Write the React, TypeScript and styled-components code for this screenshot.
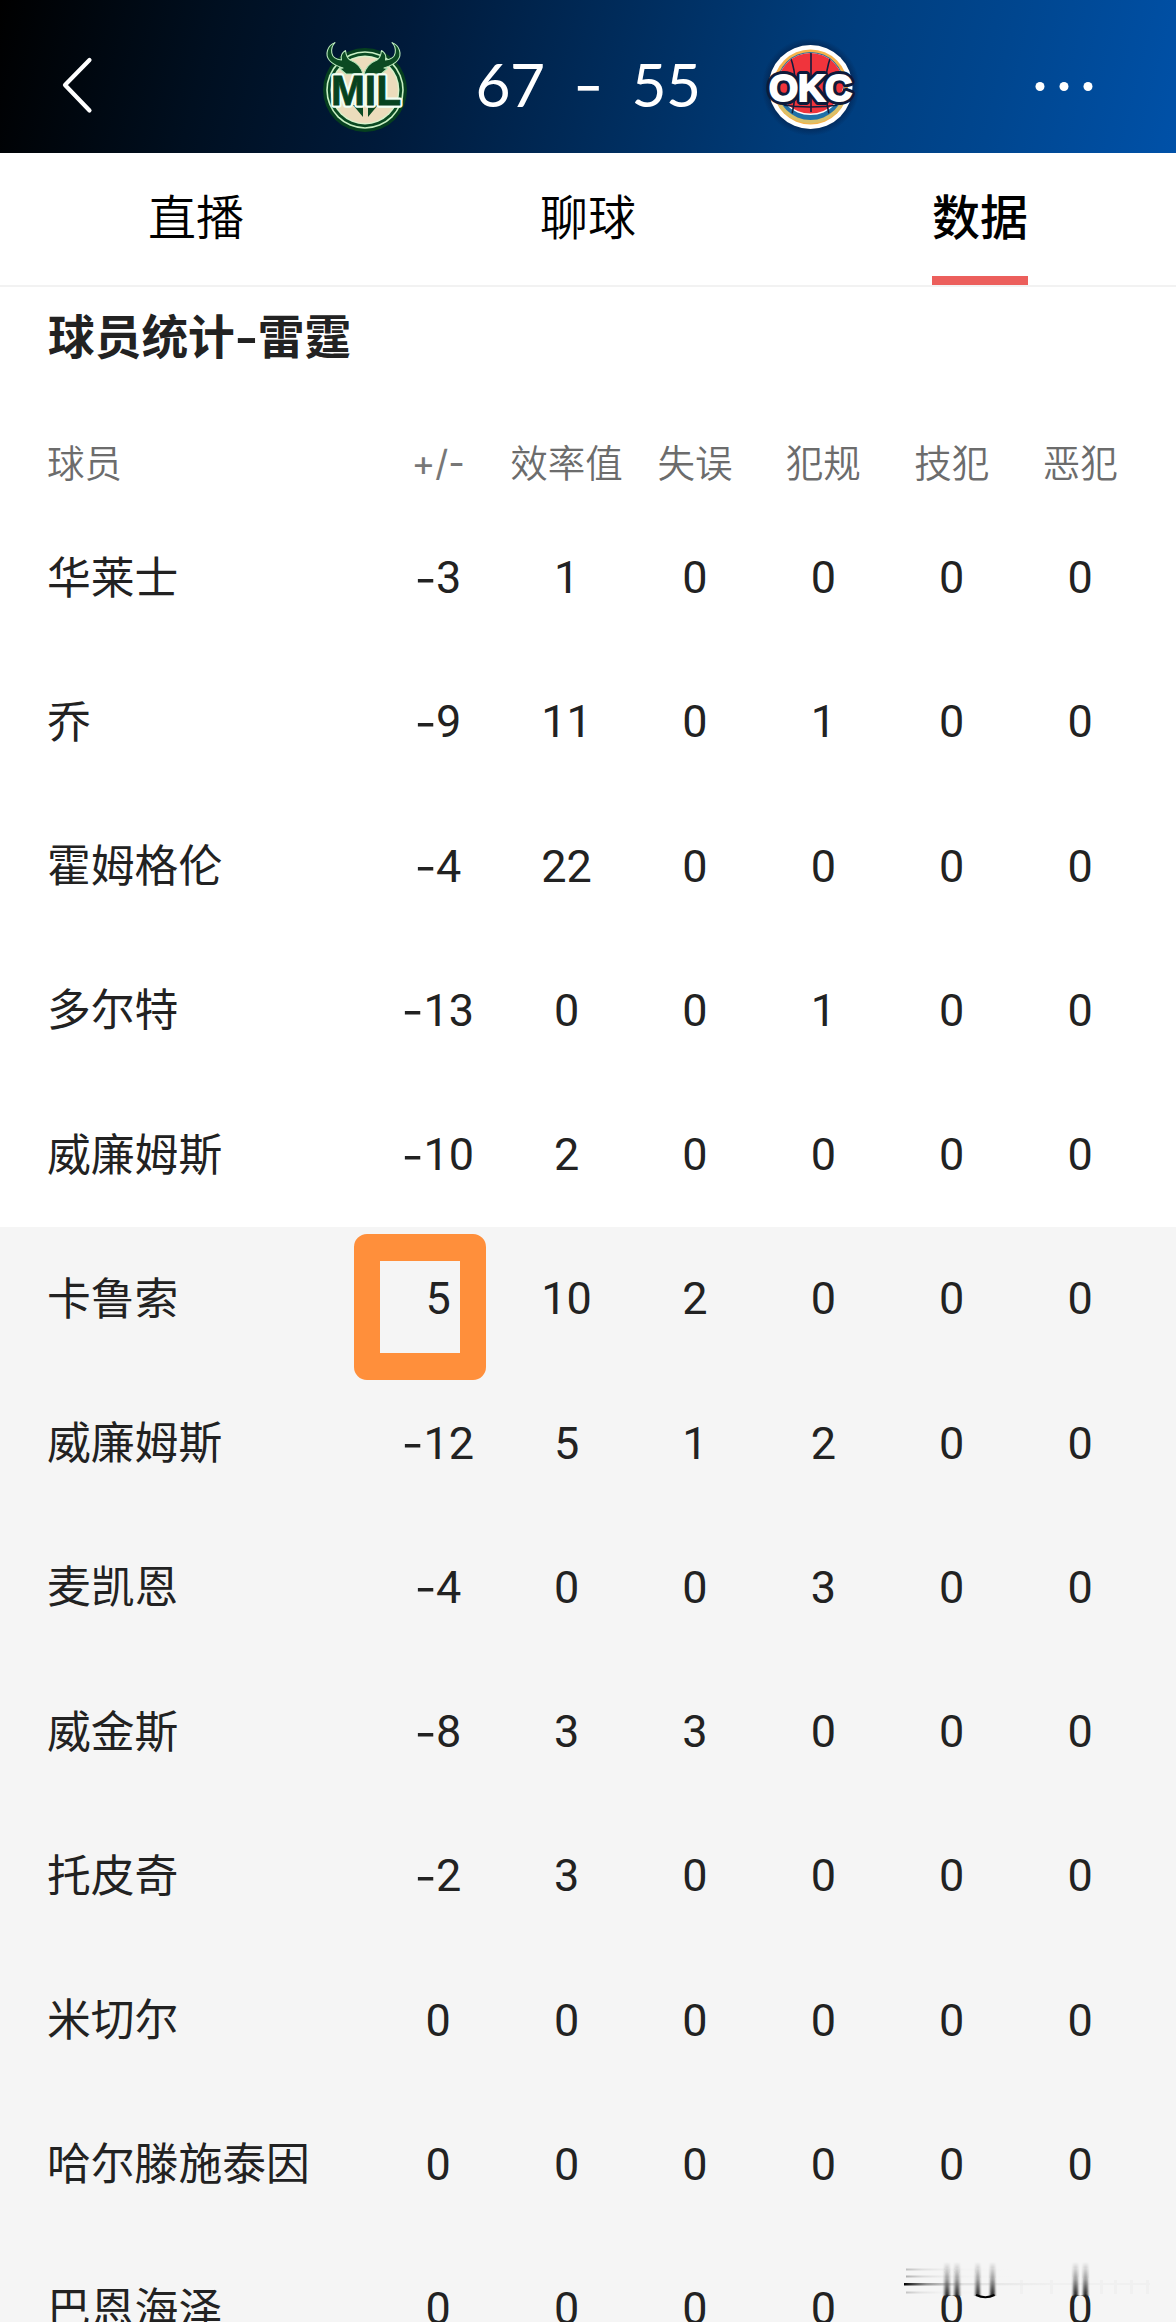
import React from 'react';
import styled, { createGlobalStyle, css } from 'styled-components';

const CJK = `"Noto Sans CJK SC", sans-serif`;
const DIGITS = `Roboto, "Noto Sans CJK SC", sans-serif`;
const SCREEN_HEIGHT = 2322;

const GlobalStyle = createGlobalStyle`
  body {
    margin: 0;
    background: #f5f5f5;
  }
`;

const Screen = styled.div`
  position: relative;
  width: 1176px;
  height: ${SCREEN_HEIGHT}px;
  overflow: hidden;
  background: #fff;
  font-family: ${CJK};
  color: #222;
`;

const Header = styled.header`
  display: grid;
  grid-template-columns: 310px 110px 335px 110px 1fr;
  height: 153px;
  background: linear-gradient(
    104deg,
    #000 0%,
    #000f20 18%,
    #001a3a 34%,
    #002a58 50%,
    #003c7a 68%,
    #00468f 84%,
    #0051a8 100%
  );
`;

const HeaderArt = styled.svg`
  display: block;
  height: 153px;
`;

const Score = styled.div`
  display: grid;
  grid-template-columns: repeat(3, 78px);
  justify-content: center;
  padding: 47px 0 0 1px;
  height: 74px;
  line-height: 74px;
  text-align: center;
  font-family: Lato, sans-serif;
  font-size: 60.5px;
  letter-spacing: -0.5px;
  color: #fff;
`;

const ScoreDash = styled.span`
  font-family: Inter, sans-serif;
  font-size: 57px;
  padding-top: 2px;
  transform: scaleX(1.15);
`;

const Tabs = styled.nav`
  display: grid;
  grid-template-columns: repeat(3, 1fr);
  height: 132px;
  border-bottom: 2px solid #f2f2f2;
`;

const Tab = styled.div<{ $active?: boolean }>`
  justify-self: center;
  box-sizing: border-box;
  height: 132px;
  padding-top: 25px;
  line-height: 72px;
  font-size: 48px;
  font-weight: ${p => (p.$active ? 500 : 350)};
  color: #000;
  border-bottom: 9px solid ${p => (p.$active ? '#ec5f5c' : 'transparent')};
`;

const Title = styled.h2`
  margin: 0;
  height: 133px;
  padding: 12px 0 0 48px;
  box-sizing: border-box;
  line-height: 70px;
  font-size: 46.7px;
  font-weight: 700;
`;

const TitleDash = styled.span`
  display: inline-block;
  width: 23px;
  text-align: center;
  transform: scaleX(1.35);
`;

const rowGrid = css`
  display: grid;
  grid-template-columns: 326px repeat(6, 128.4px);
  padding-left: 48px;
  align-items: center;
`;

const HeadRow = styled.div`
  ${rowGrid}
  height: 85.5px;
  font-size: 37.5px;
  font-weight: 350;
  color: #6c6c6c;
`;

const HeadCell = styled.span<{ $latin?: boolean; $first?: boolean }>`
  text-align: ${p => (p.$first ? 'left' : 'center')};
  white-space: nowrap;
  padding-bottom: 5px;
  margin-left: ${p => (p.$first ? '-1px' : '0')};
  ${p =>
    p.$latin &&
    css`
      padding-bottom: 0;
      font-family: Inter, sans-serif;
      font-size: 36px;
      font-weight: 400;
      color: #777;
    `}
`;

const Group = styled.section<{ $shaded?: boolean }>`
  background: ${p => (p.$shaded ? '#f5f5f5' : '#fff')};
`;

const Row = styled.div`
  ${rowGrid}
  height: 144.25px;
`;

const Name = styled.span`
  margin-left: -1px;
  padding-bottom: 6px;
  font-size: 43.8px;
  white-space: nowrap;
`;

const Value = styled.span`
  position: relative;
  display: flex;
  align-items: center;
  justify-content: center;
  height: 100%;
  font-family: ${DIGITS};
  font-size: 45px;
`;

const Minus = styled.span`
  width: 21px;
  text-align: center;
  font-family: Inter, sans-serif;
  font-size: 43px;
  transform: scaleX(1.12);
`;

const Highlight = styled.i`
  position: absolute;
  left: -20px;
  top: 7px;
  box-sizing: border-box;
  width: 131.5px;
  height: 146px;
  border: solid #ff8f3b;
  border-width: 27px 26.5px;
  border-radius: 13px;
`;

const Smear = styled.svg`
  position: absolute;
  left: 896px;
  top: 2256px;
`;

const Antler = ({ flip }: { flip?: boolean }) => (
  <path
    transform={flip ? 'translate(727 0) scale(-1 1)' : undefined}
    d="M335 42.700C327.500 45 324.500 54.500 329.500 60.500C333 64.500 338 66.500 343 68L339.500 68.500L346 74L363 74C361 66.500 356.500 62.500 350 60C347 58 346 55 345.500 50.500C341.500 53 340.500 56.500 341.500 60C336 59.500 332.500 57 331.800 53C331.200 49 332 45.500 335 42.700Z"
    fill="#0b4a22"
    stroke="#b9e8bb"
    strokeWidth="1.100"
    strokeLinejoin="round"
  />
);

const BucksLogo = () => (
  <HeaderArt width="110" viewBox="310 0 110 153">
    <circle cx="365" cy="90" r="42" fill="#06401f" />
    <circle cx="365" cy="90" r="38.800" fill="#c9f0c4" />
    <circle cx="365" cy="90" r="37.200" fill="#0a4a22" />
    <circle cx="365" cy="90" r="34.400" fill="#d9f3cc" />
    <circle cx="365" cy="90" r="33" fill="#ecdcbc" />
    <Antler />
    <Antler flip />
    <path d="M353 105l10 12v-12zM378 105l-10 12v-12z" fill="#0b4a22" />
    <text
      x="331"
      y="104.500"
      textLength="70"
      lengthAdjust="spacingAndGlyphs"
      fontFamily="Liberation Sans, sans-serif"
      fontWeight="700"
      fontSize="42.500"
      fill="none"
      stroke="#f2fff4"
      strokeWidth="5.500"
      strokeLinejoin="round"
    >
      MIL
    </text>
    <text
      x="331"
      y="104.500"
      textLength="70"
      lengthAdjust="spacingAndGlyphs"
      fontFamily="Liberation Sans, sans-serif"
      fontWeight="700"
      fontSize="42.500"
      fill="#07421f"
      stroke="#07421f"
      strokeWidth="0.800"
      aria-hidden="true"
    >
      MIL
    </text>
  </HeaderArt>
);

const ThunderLogo = () => (
  <HeaderArt width="110" viewBox="755 0 110 153">
    <defs>
      <clipPath id="ball">
        <circle cx="810.500" cy="86" r="33" />
      </clipPath>
      <radialGradient id="glow">
        <stop offset="0.800" stopColor="#04204a" stopOpacity="0.800" />
        <stop offset="1" stopColor="#04204a" stopOpacity="0" />
      </radialGradient>
    </defs>
    <circle cx="810.500" cy="87" r="49" fill="url(#glow)" />
    <circle cx="810.500" cy="87" r="42" fill="#fff" />
    <circle cx="810.500" cy="87" r="37.500" fill="#f6b24a" />
    <path d="M773.500 92a37.500 37.500 0 0 0 74 0z" fill="#d9c06a" />
    <circle cx="810.500" cy="86" r="34" fill="#2071a8" />
    <g clipPath="url(#ball)">
      <circle cx="810.500" cy="81" r="34" fill="#fff" />
      <circle cx="810.500" cy="80" r="33.500" fill="#f0343c" />
      <g fill="none" stroke="#101c3d" strokeWidth="1.600">
        <path d="M811 50v62M790 56c7 18 7 36 2 58M831 56c-7 18-7 36-2 58M782 105q28 4 57 0" />
      </g>
    </g>
    <text
      x="769"
      y="100.500"
      textLength="83"
      lengthAdjust="spacingAndGlyphs"
      fontFamily="Liberation Sans, sans-serif"
      fontWeight="700"
      fontSize="37"
      fill="none"
      stroke="#0e1a3a"
      strokeWidth="8"
      strokeLinejoin="round"
    >
      OKC
    </text>
    <text
      x="769"
      y="100.500"
      textLength="83"
      lengthAdjust="spacingAndGlyphs"
      fontFamily="Liberation Sans, sans-serif"
      fontWeight="700"
      fontSize="37"
      fill="#fff"
      stroke="#fff"
      strokeWidth="2"
      aria-hidden="true"
    >
      OKC
    </text>
  </HeaderArt>
);

const SmearMark = () => (
  <Smear width="264" height="66" viewBox="896 2256 264 66">
    <defs>
      <linearGradient id="fadeUp" x1="0" y1="0" x2="0" y2="1">
        <stop offset="0" stopColor="#222" stopOpacity="0" />
        <stop offset="0.500" stopColor="#222" stopOpacity="0.400" />
        <stop offset="1" stopColor="#1a1a1a" stopOpacity="0.950" />
      </linearGradient>
      <linearGradient id="edge" x1="0" y1="0" x2="1" y2="0">
        <stop offset="0" stopColor="#000" />
        <stop offset="0.150" stopColor="#333" stopOpacity="0.500" />
        <stop offset="0.400" stopColor="#777" stopOpacity="0.120" />
        <stop offset="1" stopColor="#999" stopOpacity="0" />
      </linearGradient>
      <filter id="soft" x="-40%" y="-10%" width="180%" height="120%">
        <feGaussianBlur stdDeviation="1.300 0.300" />
      </filter>
    </defs>
    <path d="M938 2286h28v9.500h-28zM1066 2286h28v9.500h-28z" fill="#f5f5f5" />
    <g fill="url(#fadeUp)" filter="url(#soft)">
      <rect x="944.500" y="2262" width="5" height="34" />
      <rect x="954.500" y="2262" width="5" height="34" />
      <rect x="975.500" y="2262" width="4.500" height="34" />
      <rect x="990" y="2262" width="5" height="34" />
      <rect x="1073" y="2262" width="5" height="34" />
      <rect x="1083" y="2262" width="5" height="34" />
    </g>
    <path d="M976 2295q9.500 4.500 18.500 0" fill="none" stroke="#000" strokeWidth="2" />
    <g fill="url(#edge)">
      <rect x="904" y="2283" width="150" height="2.500" />
      <rect x="906" y="2268.500" width="110" height="2" opacity="0.220" />
      <rect x="906" y="2275.500" width="110" height="2" opacity="0.280" />
      <rect x="906" y="2291.500" width="90" height="2" opacity="0.200" />
    </g>
    <g fill="#888" opacity="0.040">
      <rect x="960" y="2283" width="190" height="2" />
      <rect x="1020" y="2280" width="3" height="14" />
      <rect x="1050" y="2280" width="3" height="14" />
      <rect x="1100" y="2280" width="3" height="14" />
      <rect x="1114" y="2280" width="3" height="14" />
      <rect x="1130" y="2280" width="3" height="14" />
      <rect x="1146" y="2280" width="3" height="14" />
    </g>
  </Smear>
);

type Player = { name: string; stats: number[]; marked?: boolean };

const COLUMNS = ['+/-', '效率值', '失误', '犯规', '技犯', '恶犯'];

const STARTERS: Player[] = [
  { name: '华莱士', stats: [-3, 1, 0, 0, 0, 0] },
  { name: '乔', stats: [-9, 11, 0, 1, 0, 0] },
  { name: '霍姆格伦', stats: [-4, 22, 0, 0, 0, 0] },
  { name: '多尔特', stats: [-13, 0, 0, 1, 0, 0] },
  { name: '威廉姆斯', stats: [-10, 2, 0, 0, 0, 0] },
];

const BENCH: Player[] = [
  { name: '卡鲁索', stats: [5, 10, 2, 0, 0, 0], marked: true },
  { name: '威廉姆斯', stats: [-12, 5, 1, 2, 0, 0] },
  { name: '麦凯恩', stats: [-4, 0, 0, 3, 0, 0] },
  { name: '威金斯', stats: [-8, 3, 3, 0, 0, 0] },
  { name: '托皮奇', stats: [-2, 3, 0, 0, 0, 0] },
  { name: '米切尔', stats: [0, 0, 0, 0, 0, 0] },
  { name: '哈尔滕施泰因', stats: [0, 0, 0, 0, 0, 0] },
  { name: '巴恩海泽', stats: [0, 0, 0, 0, 0, 0] },
];

const PlayerRow = ({ player }: { player: Player }) => (
  <Row>
    <Name>{player.name}</Name>
    {player.stats.map((n, i) => (
      <Value key={i}>
        {n < 0 && <Minus>-</Minus>}
        {Math.abs(n)}
        {player.marked && i === 0 && <Highlight />}
      </Value>
    ))}
  </Row>
);

export default function App() {
  return (
    <Screen>
      <GlobalStyle />
      <Header>
        <HeaderArt width="310" viewBox="0 0 310 153">
          <path
            d="M89.500 60L65 85l24.500 25.500"
            fill="none"
            stroke="#fff"
            strokeWidth="4.200"
            strokeLinecap="round"
            strokeLinejoin="round"
          />
        </HeaderArt>
        <BucksLogo />
        <Score>
          <span>67</span>
          <ScoreDash>-</ScoreDash>
          <span>55</span>
        </Score>
        <ThunderLogo />
        <HeaderArt width="311" viewBox="865 0 311 153">
          <g fill="#fff">
            <circle cx="1040" cy="86.500" r="4.500" />
            <circle cx="1064" cy="86.500" r="4.500" />
            <circle cx="1088" cy="86.500" r="4.500" />
          </g>
        </HeaderArt>
      </Header>
      <Tabs>
        <Tab>直播</Tab>
        <Tab>聊球</Tab>
        <Tab $active>数据</Tab>
      </Tabs>
      <Title>
        球员统计<TitleDash>-</TitleDash>雷霆
      </Title>
      <HeadRow>
        <HeadCell $first>球员</HeadCell>
        {COLUMNS.map((c, i) => (
          <HeadCell key={c} $latin={i === 0}>
            {c}
          </HeadCell>
        ))}
      </HeadRow>
      <Group>
        {STARTERS.map((p, i) => (
          <PlayerRow key={i} player={p} />
        ))}
      </Group>
      <Group $shaded>
        {BENCH.map((p, i) => (
          <PlayerRow key={i} player={p} />
        ))}
      </Group>
      <SmearMark />
    </Screen>
  );
}
